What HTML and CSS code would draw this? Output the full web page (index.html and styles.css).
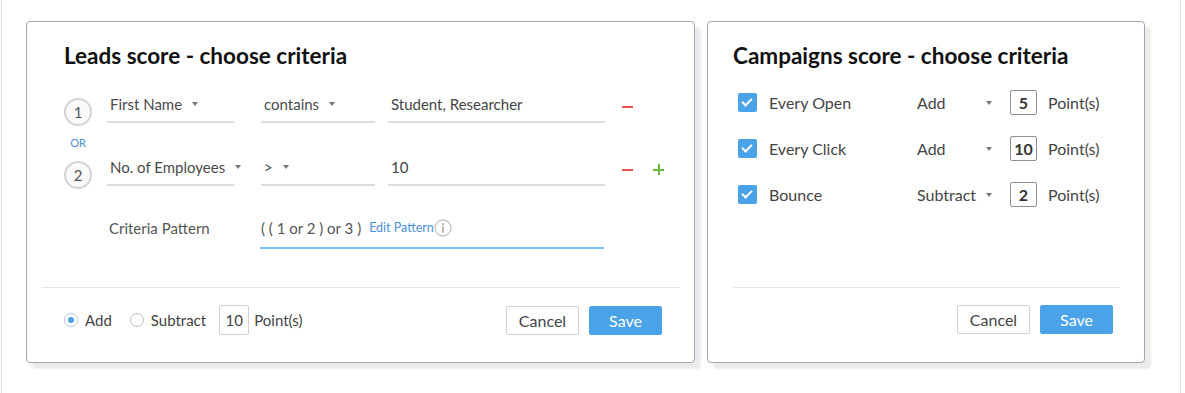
FILE: index.html
```html
<!DOCTYPE html>
<html lang="en">
<head>
    <meta charset="UTF-8">
    <meta name="viewport" content="width=device-width, initial-scale=1.0">
    <title>Score criteria</title>
    <link rel="stylesheet" href="styles.css">
</head>
<body>

    <div class="page">

        <!-- Leads score -->
        <div class="card leads-card">
            <div class="card-body">
                <h2 class="card-title">Leads score - choose criteria</h2>

                <div class="criteria-row">
                    <span class="step">1</span>
                    <div class="field field-attr">First Name<span class="caret"></span></div>
                    <div class="field field-op">contains<span class="caret"></span></div>
                    <div class="field field-value">Student, Researcher</div>
                    <div class="row-actions">
                        <span class="remove"></span>
                    </div>
                </div>

                <div class="or-label">OR</div>

                <div class="criteria-row">
                    <span class="step">2</span>
                    <div class="field field-attr">No. of Employees<span class="caret"></span></div>
                    <div class="field field-op">&gt;<span class="caret"></span></div>
                    <div class="field field-value">10</div>
                    <div class="row-actions">
                        <span class="remove"></span>
                        <span class="add"></span>
                    </div>
                </div>

                <div class="pattern-row">
                    <div class="pattern-label">Criteria Pattern</div>
                    <div class="pattern-field">
                        <span class="pattern-text">( ( 1 or 2 ) or 3 )</span>
                        <a href="#" class="edit-link">Edit Pattern</a>
                        <svg class="info-icon" width="18" height="18" viewBox="0 0 18 18">
                            <circle cx="9" cy="9" r="8" fill="none" stroke="#c4c4c4" stroke-width="1.3"/>
                            <circle cx="9" cy="5.2" r="1.1" fill="#b0b0b0"/>
                            <rect x="8.1" y="7.4" width="1.8" height="6.2" fill="#b0b0b0"/>
                        </svg>
                    </div>
                </div>
            </div>

            <div class="card-footer leads-footer">
                <div class="points-choice">
                    <label class="radio checked"><span class="radio-dot"></span>Add</label>
                    <label class="radio"><span class="radio-dot"></span>Subtract</label>
                    <span class="points-box">10</span>
                    <span class="points-label">Point(s)</span>
                </div>
                <div class="buttons">
                    <button class="btn btn-cancel">Cancel</button>
                    <button class="btn btn-save">Save</button>
                </div>
            </div>
        </div>

        <!-- Campaigns score -->
        <div class="card campaigns-card">
            <div class="card-body">
                <h2 class="card-title">Campaigns score - choose criteria</h2>

                <div class="campaign-list">
                    <div class="campaign-row">
                        <span class="checkbox"></span>
                        <span class="campaign-name">Every Open</span>
                        <span class="campaign-op">Add<span class="caret"></span></span>
                        <span class="score-box">5</span>
                        <span class="points-label">Point(s)</span>
                    </div>
                    <div class="campaign-row">
                        <span class="checkbox"></span>
                        <span class="campaign-name">Every Click</span>
                        <span class="campaign-op">Add<span class="caret"></span></span>
                        <span class="score-box">10</span>
                        <span class="points-label">Point(s)</span>
                    </div>
                    <div class="campaign-row">
                        <span class="checkbox"></span>
                        <span class="campaign-name">Bounce</span>
                        <span class="campaign-op">Subtract<span class="caret"></span></span>
                        <span class="score-box">2</span>
                        <span class="points-label">Point(s)</span>
                    </div>
                </div>
            </div>

            <div class="card-footer campaigns-footer">
                <div class="buttons">
                    <button class="btn btn-cancel">Cancel</button>
                    <button class="btn btn-save">Save</button>
                </div>
            </div>
        </div>

    </div>

</body>
</html>
```

FILE: styles.css
```css
body {
    margin: 0;
    font-family: Lato, "Open Sans", sans-serif;
    font-size: 15px;
    color: #4a4a4a;
    background-color: #fff;
}

.page {
    margin-left: 1px;
    width: 1180px;
    height: 393px;
    box-sizing: border-box;
    border-left: 1px solid #dedede;
    border-right: 1px solid #e4e4e4;
    padding: 21px 0 0 24px;
    display: flex;
    gap: 12px;
}

.card {
    height: 342px;
    box-sizing: border-box;
    border: 1px solid #a0a6b4;
    border-radius: 4px;
    background-color: #fff;
    box-shadow: 6px 6px 2px rgba(0, 0, 0, 0.08);
    display: flex;
    flex-direction: column;
}

.leads-card {
    width: 669px;
}

.campaigns-card {
    width: 438px;
}

.card-body {
    flex: 1;
}

.leads-card .card-body {
    padding: 21px 37px 0;
}

.campaigns-card .card-body {
    padding: 21px 25px 0;
}

.card-title {
    margin: 0 0 21px;
    font-size: 22.5px;
    line-height: 26px;
    font-weight: 700;
    color: #111;
}

/* criteria rows */

.criteria-row {
    display: flex;
    align-items: center;
}

.step {
    width: 28px;
    height: 28px;
    box-sizing: border-box;
    border: 2px solid #d4d4d4;
    border-radius: 50%;
    background-color: #fafafa;
    color: #555;
    font-size: 15px;
    line-height: 24px;
    text-align: center;
    align-self: flex-end;
    margin-bottom: -3px;
    flex-shrink: 0;
}

.field {
    box-sizing: border-box;
    padding: 4px 0 7px 3px;
    line-height: 20px;
    border-bottom: 2px solid #dcdcdc;
    display: flex;
    align-items: center;
    white-space: nowrap;
    flex-shrink: 0;
}

.field-attr {
    width: 127px;
    margin-left: 15px;
}

.field-op {
    width: 114px;
    margin-left: 27px;
}

.field-value {
    width: 217px;
    margin-left: 13px;
    color: #444;
}

.caret {
    display: inline-block;
    flex-shrink: 0;
    width: 0;
    height: 0;
    margin-left: 10px;
    border-left: 3.5px solid transparent;
    border-right: 3.5px solid transparent;
    border-top: 4px solid #777;
}

.row-actions {
    display: flex;
    align-items: center;
    margin-left: 17px;
}

.remove {
    width: 11px;
    height: 2px;
    background-color: #e8504f;
}

.add {
    position: relative;
    width: 11px;
    height: 11px;
    margin-left: 20px;
}

.add::before,
.add::after {
    content: "";
    position: absolute;
    background-color: #6dbb3e;
}

.add::before {
    left: 0;
    top: 4.5px;
    width: 11px;
    height: 2px;
}

.add::after {
    left: 4.5px;
    top: 0;
    width: 2px;
    height: 11px;
}

.or-label {
    width: 28px;
    height: 30px;
    box-sizing: border-box;
    padding-top: 10px;
    line-height: 20px;
    text-align: center;
    font-size: 11px;
    color: #4a90d9;
}

/* pattern */

.pattern-row {
    display: flex;
    align-items: baseline;
    margin-top: 30px;
    padding-left: 45px;
}

.pattern-label {
    width: 151px;
    color: #555;
}

.pattern-field {
    width: 344px;
    box-sizing: border-box;
    padding: 2px 0 9px 1px;
    line-height: 20px;
    border-bottom: 2px solid #7dc1f5;
    display: flex;
    align-items: center;
}

.pattern-text {
    color: #555;
}

.edit-link {
    margin-left: 8px;
    font-size: 12.5px;
    color: #4a90d9;
    text-decoration: none;
}

/* footer */

.card-footer {
    border-top: 1px solid #e6e6e6;
    display: flex;
    align-items: center;
    justify-content: space-between;
}

.leads-footer {
    margin: 0 15px;
    padding: 17px 17px 27px 22px;
}

.campaigns-footer {
    margin: 0 24px 0 25px;
    padding: 17px 7px 28px 0;
    justify-content: flex-end;
}

.points-choice {
    display: flex;
    align-items: center;
}

.radio {
    display: flex;
    align-items: center;
    color: #444;
    margin-right: 18px;
}

.radio-dot {
    width: 14px;
    height: 14px;
    box-sizing: border-box;
    border: 1px solid #bdbdbd;
    border-radius: 50%;
    margin-right: 7px;
    position: relative;
}

.radio.checked .radio-dot {
    border-color: #b9c9d9;
}

.radio.checked .radio-dot::after {
    content: "";
    position: absolute;
    left: 3px;
    top: 3px;
    width: 6px;
    height: 6px;
    border-radius: 50%;
    background-color: #4aa3e8;
}

.radio + .radio {
    margin-right: 13px;
}

.points-box {
    width: 30px;
    height: 30px;
    box-sizing: border-box;
    border: 1px solid #d0d0d0;
    border-radius: 2px;
    line-height: 28px;
    text-align: center;
    color: #444;
}

.points-label {
    margin-left: 5px;
    color: #444;
}

.buttons {
    display: flex;
    gap: 10px;
}

.btn {
    width: 73px;
    height: 29px;
    box-sizing: border-box;
    font-family: Lato, "Open Sans", sans-serif;
    font-size: 16px;
    border-radius: 2px;
    cursor: pointer;
}

.btn-cancel {
    background-color: #fff;
    border: 1px solid #cfcfcf;
    color: #444;
}

.btn-save {
    background-color: #4aa3e8;
    border: 1px solid #4aa3e8;
    color: #fff;
}

/* campaigns */

.campaign-list {
    display: flex;
    flex-direction: column;
    gap: 21px;
    padding-left: 5px;
    font-size: 16px;
}

.campaign-row {
    height: 25px;
    display: flex;
    align-items: center;
}

.checkbox {
    width: 19px;
    height: 19px;
    border-radius: 2px;
    background-color: #4aa3e8;
    position: relative;
}

.checkbox::after {
    content: "";
    position: absolute;
    left: 6px;
    top: 3px;
    width: 4px;
    height: 8px;
    border-right: 2px solid #fff;
    border-bottom: 2px solid #fff;
    transform: rotate(45deg);
}

.campaign-name {
    width: 148px;
    margin-left: 12px;
    color: #444;
}

.campaign-op {
    width: 80px;
    margin-right: 13px;
    display: flex;
    align-items: center;
    justify-content: space-between;
    color: #444;
    box-sizing: border-box;
    padding-right: 5px;
}

.score-box {
    width: 27px;
    height: 25px;
    box-sizing: border-box;
    border: 1px solid #8f8f8f;
    border-radius: 2px;
    text-align: center;
    line-height: 23px;
    font-weight: 700;
    color: #333;
}

.campaign-row .points-label {
    margin-left: 11px;
}
```
